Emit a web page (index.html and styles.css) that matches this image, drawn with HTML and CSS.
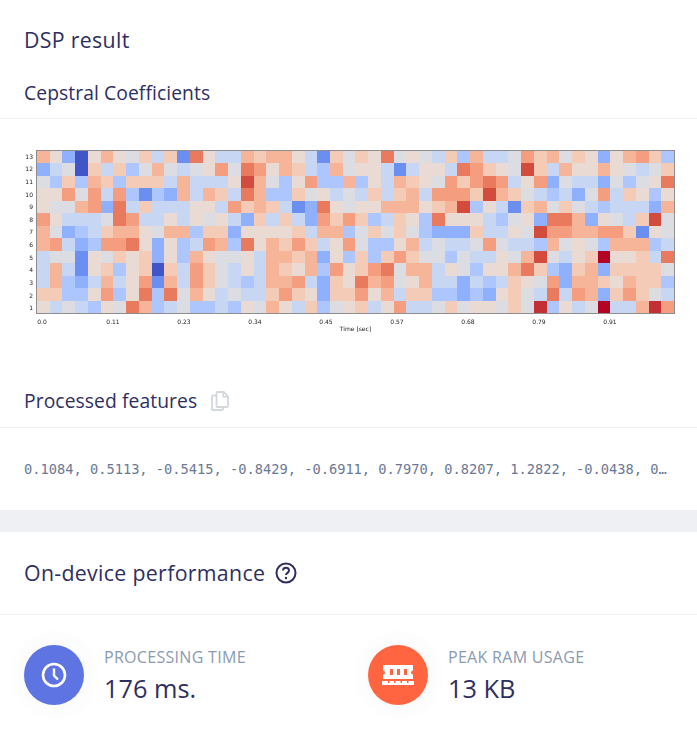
FILE: index.html
```html
<!DOCTYPE html>
<html lang="en">
<head>
<meta charset="utf-8">
<title>DSP result</title>
<link rel="stylesheet" href="styles.css">
</head>
<body>
<main class="page">
  <section class="card card-dsp">
    <h2 class="card-title">DSP result</h2>
    <h3 class="sub-title sub-cepstral">Cepstral Coefficients</h3>
    <div class="figure">
      <div class="plot-row">
        <div class="y-labels" id="ylabels"></div>
        <div class="heatmap" id="heatmap"></div>
      </div>
      <div class="x-ticks">
        <span>0.0</span><span>0.11</span><span>0.23</span><span>0.34</span><span>0.45</span><span>0.57</span><span>0.68</span><span>0.79</span><span>0.91</span>
      </div>
      <div class="x-title">Time [sec]</div>
    </div>
    <h3 class="sub-title sub-features">Processed features
      <svg class="copy-icon" viewBox="0 0 18 20" width="18" height="20" aria-hidden="true">
        <path d="M6.500 1h6.200L17 5.300V15a1 1 0 0 1-1 1H6.500a1 1 0 0 1-1-1V2a1 1 0 0 1 1-1z" fill="none" stroke="#d3d8de" stroke-width="1.800"/>
        <path d="M12.200 1v4.800H17" fill="none" stroke="#d3d8de" stroke-width="1.600"/>
        <path d="M5.500 4.500H2a1 1 0 0 0-1 1V18a1 1 0 0 0 1 1h9a1 1 0 0 0 1-1v-2" fill="none" stroke="#d3d8de" stroke-width="1.800"/>
      </svg>
    </h3>
    <div class="features">0.1084, 0.5113, -0.5415, -0.8429, -0.6911, 0.7970, 0.8207, 1.2822, -0.0438, 0.4402, 0.1932, -0.7361</div>
  </section>
  <section class="card card-perf">
    <h2 class="perf-title">On-device performance
      <svg class="help-icon" viewBox="0 0 22 22" width="22" height="22" aria-hidden="true">
        <circle cx="11" cy="11" r="9.500" fill="none" stroke="#2f2f5f" stroke-width="2"/>
        <path d="M8 8.600a3 3 0 0 1 6 .1c0 2-3 2.300-3 4.200" fill="none" stroke="#2f2f5f" stroke-width="2"/>
        <circle cx="11" cy="16" r="1.200" fill="#2f2f5f"/>
      </svg>
    </h2>
    <div class="stats">
      <div class="stat">
        <div class="stat-icon stat-blue">
          <svg viewBox="0 0 26 26" width="26" height="26" aria-hidden="true">
            <circle cx="13" cy="13" r="11" fill="none" stroke="#fff" stroke-width="2.600"/>
            <path d="M13 6.500V13.500L17 17.500" fill="none" stroke="#fff" stroke-width="2.400"/>
          </svg>
        </div>
        <div class="stat-text">
          <div class="stat-label">PROCESSING TIME</div>
          <div class="stat-value">176 ms.</div>
        </div>
      </div>
      <div class="stat">
        <div class="stat-icon stat-orange">
          <svg viewBox="0 0 32 20" width="32" height="20" aria-hidden="true">
            <path fill="#fff" fill-rule="evenodd" d="M1 0h30v5.500a2 2 0 0 0 0 4V14H1V9.500a2 2 0 0 0 0-4zM8 4v6h3V4zM15 4v6h3V4zM22 4v6h3V4z"/>
            <path fill="#fff" d="M0 16h32v4H0z"/>
            <path fill="#ff6540" d="M6 16h1.500v2H6zM12 16h1.500v2H12zM18.500 16h1.500v2h-1.500zM25 16h1.500v2H25z"/>
          </svg>
        </div>
        <div class="stat-text">
          <div class="stat-label">PEAK RAM USAGE</div>
          <div class="stat-value">13 KB</div>
        </div>
      </div>
    </div>
  </section>
</main>
<script src="script.js"></script>
</body>
</html>
```

FILE: styles.css
```css
* { box-sizing: border-box; }
html, body { margin: 0; padding: 0; }
body {
  background: #fff;
  color: #2f2f5f;
  font-family: "Open Sans", "Noto Sans", sans-serif;
  height: 735px;
  overflow: hidden;
}
.page { background: #eef0f4; height: 735px; }
.card { background: #fff; }
.card-dsp { height: 510px; }
.card-perf { margin-top: 22px; height: 203px; }
h2, h3 { margin: 0; font-weight: 500; }

.card-title {
  font-size: 21.300px;
  letter-spacing: 0.33px;
  line-height: 28px;
  padding: 26px 24px 0;
}
.sub-title {
  display: flex;
  align-items: center;
  font-size: 19.300px;
  letter-spacing: 0.08px;
  line-height: 26px;
  padding: 0 24px;
  border-bottom: 1px solid #f0f1f4;
}
.sub-cepstral { height: 65px; padding-top: 26px; padding-bottom: 13px; }
.sub-features { height: 41px; padding-bottom: 12px; }
.copy-icon { margin-left: 14px; }

.figure { height: 268px; padding-top: 31px; filter: blur(0.3px); }
.plot-row { display: flex; height: 164px; }
.y-labels {
  width: 36px;
  display: flex;
  flex-direction: column;
  font-family: "DejaVu Sans", sans-serif;
  font-size: 6px;
  color: #222;
}
.y-labels span {
  flex: 1;
  display: flex;
  align-items: center;
  justify-content: flex-end;
  padding-right: 3px;
}
.heatmap {
  width: 639px;
  height: 164px;
  display: grid;
  grid-template-columns: repeat(50, 1fr);
  grid-template-rows: repeat(13, 1fr);
  border: 1px solid #8e8e8e;
}
.x-ticks {
  display: flex;
  padding: 4px 0 0 6.500px;
  font-family: "DejaVu Sans", sans-serif;
  font-size: 6px;
  line-height: 7px;
  color: #222;
}
.x-ticks span { width: 71px; text-align: center; }
.x-title {
  width: 639px;
  margin-left: 36px;
  text-align: center;
  font-family: "DejaVu Sans", sans-serif;
  font-size: 6px;
  line-height: 8px;
  color: #222;
}

.c-a { background: #3f55c8; }
.c-b { background: #6a8ff0; }
.c-c { background: #8fb0fd; }
.c-d { background: #adc6fd; }
.c-e { background: #c7d6f3; }
.c-f { background: #dcdde2; }
.c-g { background: #e9dbd3; }
.c-h { background: #f3cbb6; }
.c-i { background: #f6b598; }
.c-j { background: #f59e7f; }
.c-k { background: #ea7a5e; }
.c-l { background: #d24b3c; }
.c-n { background: #c23033; }
.c-m { background: #b40426; }

.features {
  padding: 33px 24px 0;
  font-family: "DejaVu Sans Mono", monospace;
  font-size: 13.700px;
  line-height: 17px;
  color: #6b7894;
  white-space: nowrap;
  overflow: hidden;
  text-overflow: ellipsis;
}

.perf-title {
  display: flex;
  align-items: center;
  font-size: 21.300px;
  letter-spacing: 0.33px;
  line-height: 28px;
  height: 83px;
  padding: 0 24px 0;
  border-bottom: 1px solid #f0f1f4;
}
.help-icon { margin-left: 10px; }
.stats {
  display: grid;
  grid-template-columns: 344px 1fr;
  padding: 30px 0 0 24px;
}
.stat { display: flex; align-items: center; gap: 20px; }
.stat-icon {
  width: 60px;
  height: 60px;
  border-radius: 50%;
  display: flex;
  align-items: center;
  justify-content: center;
  box-shadow: 0 0 24px rgba(60, 80, 120, 0.06);
}
.stat-blue { background: #5d74e2; }
.stat-orange { background: #ff6540; }
.stat-label {
  font-size: 16px;
  font-weight: 500;
  letter-spacing: 0.3px;
  line-height: 20px;
  color: #8a9bb0;
}
.stat-value {
  margin-top: 5px;
  font-size: 25.300px;
  font-weight: 500;
  line-height: 32px;
  color: #2f2f5f;
}
```

FILE: script.js
```js
var rows = [
  "igcagigfhehbkgeeihiigebh" + "fhgkfgfehdieefjhifhgcgijhd",
  "cefahehdfifefgjfkjgihedi" + "fggebeggekjhgflheiggigfefh",
  "fdhdihdhhheieeeglifdgjdd" + "idgeihgfjhjkjegjcfeecfdfgk",
  "ggjfjejdbdcieihekiddhfge" + "fehehiejjjhlihfedecfjehgdg",
  "gffijckeheeeggejhihebckg" + "fggiiighildgebhifhfedeeeci",
  "jgeeefkjeegegfgechehecjh" + "jhdehgdkgggedfgckkicgfehlf",
  "ifcdehiigfiidhhcggggheii" + "dfhfhfdcccheegfljjiijjhbgf",
  "ijecdjjkgcgdejidkgihjheg" + "jfddgiefeefjfeedifgfdiiide",
  "effbgfhghcgdigffgeiihicg" + "dhdhjhffdfeegfilfeghmgghek",
  "eiebghdghahejhfegeihgidj" + "ghjkfiiegfdggikhdchichhhhf",
  "eidceiegjbiejhfedeiijech" + "gkijfgieecedehgfjciihgihhd",
  "hhddgjdgkdkfigefeehjhgch" + "hjgiehhddcdcghfekejichjhfe",
  "gefedgfkidefddedgfigehdf" + "ghegjeefhfggfhfndgefmeeinj"
];

var heatmap = document.getElementById("heatmap");
rows.forEach(function (row) {
  row.split("").forEach(function (level) {
    var cell = document.createElement("div");
    cell.className = "c-" + level;
    heatmap.appendChild(cell);
  });
});

var labels = document.getElementById("ylabels");
for (var n = 13; n >= 1; n--) {
  var label = document.createElement("span");
  label.textContent = n;
  labels.appendChild(label);
}
```
